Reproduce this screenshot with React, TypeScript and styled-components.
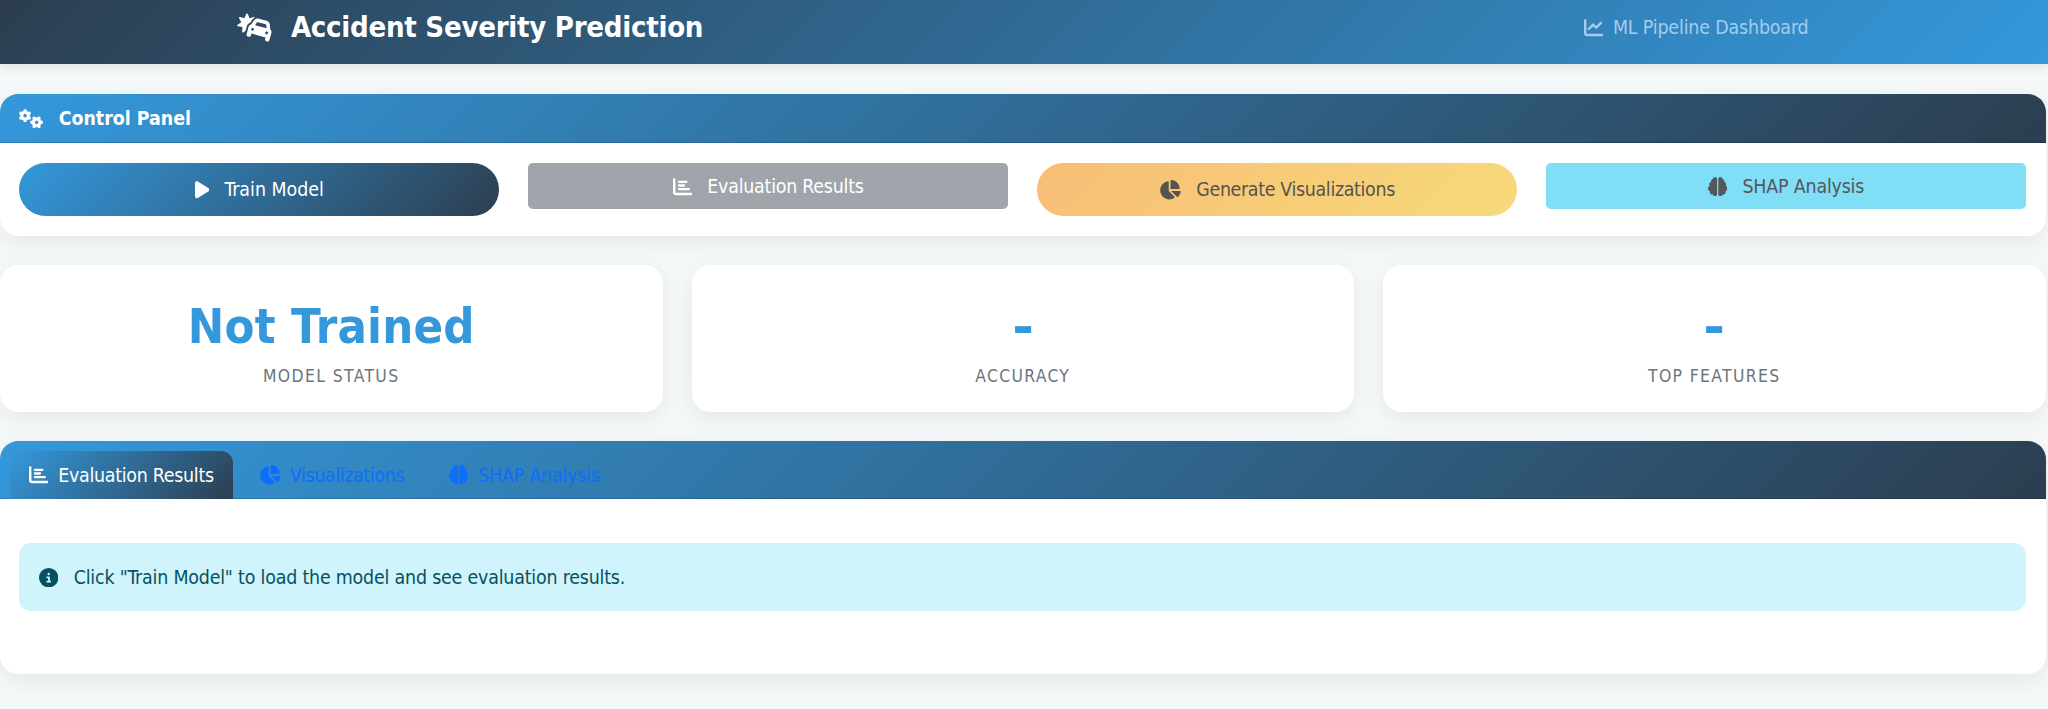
import React from 'react';
import styled, { createGlobalStyle, css } from 'styled-components';
import type { IconType } from 'react-icons';
import {
  FaBrain,
  FaCarBurst,
  FaChartBar,
  FaChartLine,
  FaChartPie,
  FaCircleInfo,
  FaGears,
  FaPlay,
} from 'react-icons/fa6';

const navy = '#2c3e50';
const blue = '#3498db';

const GlobalStyle = createGlobalStyle`
  *, *::before, *::after { box-sizing: border-box; }
  body {
    margin: 0;
    min-height: 100vh;
    background: #f5f9fa;
    color: #212529;
    font-family: "DejaVu Sans Condensed", "DejaVu Sans", sans-serif;
    font-size: 19.4px;
    line-height: 29px;
  }
`;

const IconBox = styled.span<{ $width: number }>`
  display: block;
  flex: none;
  width: ${(p) => p.$width}em;
  height: 1em;

  svg {
    display: block;
    width: 100%;
    height: 100%;
  }
`;

function Icon({ of: Glyph, width = 1 }: { of: IconType; width?: number }) {
  return (
    <IconBox $width={width}>
      <Glyph />
    </IconBox>
  );
}

const Text = styled.span<{ $tracking?: number }>`
  letter-spacing: ${(p) => p.$tracking ?? 0}px;
  white-space: nowrap;
`;

const Navbar = styled.header`
  height: 64.3px;
  background: linear-gradient(135deg, ${navy}, ${blue});
  box-shadow: 0 2px 12px rgba(0, 0, 0, 0.1);
`;

const NavInner = styled.div`
  display: flex;
  align-items: center;
  justify-content: space-between;
  width: 1571px;
  height: 55px;
  margin: 0 auto;
`;

const Brand = styled.div`
  display: flex;
  align-items: center;
  gap: 17.5px;
  margin-left: -1.5px;
  color: #fff;
  font-size: 29.1px;
  font-weight: 700;
`;

const NavNote = styled.div`
  display: flex;
  align-items: center;
  gap: 10px;
  margin-right: 1px;
  color: #a4cdee;
`;

const Page = styled.main`
  display: flex;
  flex-direction: column;
  gap: 29px;
  width: 2045.5px;
  padding: 29.3px 0 35px;
`;

const Card = styled.section`
  background: #fff;
  border-radius: 18.2px;
  box-shadow: 0 6px 24px rgba(0, 0, 0, 0.08);
`;

const headerSurface = css`
  display: flex;
  border-radius: 18.2px 18.2px 0 0;
  background: linear-gradient(135deg, ${blue}, ${navy});
  border-bottom: 1px solid rgba(0, 0, 0, 0.175);
`;

const CardHeader = styled.div`
  ${headerSurface}
  align-items: center;
  gap: 15px;
  height: 49.8px;
  padding: 1px 19.4px 0;
  color: #fff;
  font-weight: 700;
`;

const ButtonGrid = styled.div`
  display: grid;
  grid-template-columns: repeat(4, 1fr);
  align-items: start;
  gap: 29px;
  height: 92.3px;
  padding: 19.4px 19.4px 0;
`;

type Tone = 'primary' | 'secondary' | 'warning' | 'info';

const tones: Record<Tone, ReturnType<typeof css>> = {
  primary: css`
    color: #fff;
    background: linear-gradient(135deg, ${blue}, ${navy});
  `,
  secondary: css`
    color: #fff;
    background: #a0a4ab;
  `,
  warning: css`
    color: #56544f;
    background: linear-gradient(135deg, #f8bd76, #f6da79);
  `,
  info: css`
    color: #54585b;
    background: #81def7;
  `,
};

const ActionButton = styled.button<{ $tone: Tone; $pill?: boolean }>`
  display: flex;
  align-items: center;
  justify-content: center;
  gap: 15px;
  height: ${(p) => (p.$pill ? 53.4 : 46.2)}px;
  padding: 1px 0 0;
  border: 0;
  border-radius: ${(p) => (p.$pill ? 30 : 4.8)}px;
  font: inherit;
  ${(p) => tones[p.$tone]}
`;

const StatGrid = styled.div`
  display: grid;
  grid-template-columns: repeat(3, 1fr);
  gap: 29px;
`;

const StatCard = styled(Card)`
  display: flex;
  flex-direction: column;
  align-items: center;
  height: 147.4px;
  padding-top: 25px;
`;

const StatValue = styled.div<{ $empty?: boolean }>`
  color: ${blue};
  font-size: 48.5px;
  font-weight: 700;
  line-height: 73px;
  transform: ${(p) => (p.$empty ? 'scaleX(1.2)' : 'none')};
`;

const StatLabel = styled.div`
  color: #6c757d;
  font-size: 17.4px;
  line-height: 26px;
`;

const TabBar = styled.nav`
  ${headerSurface}
  align-items: flex-end;
  height: 58.2px;
  padding: 0 9.7px;
`;

const Tab = styled.button<{ $active?: boolean }>`
  display: flex;
  align-items: center;
  gap: 9.7px;
  height: 48.5px;
  margin: 0 6px -1px 0;
  padding: 0 19.4px;
  border: 0;
  border-radius: 12px 12px 0 0;
  color: ${(p) => (p.$active ? '#fff' : '#0d6efd')};
  background: ${(p) =>
    p.$active ? `linear-gradient(135deg, ${blue}, ${navy})` : 'transparent'};
  font: inherit;
`;

const TabPanel = styled.div`
  height: 174.7px;
  padding: 43.7px 19.4px 0;
`;

const Alert = styled.div`
  display: flex;
  align-items: center;
  gap: 15.5px;
  height: 67.8px;
  padding: 1px 19.4px 0;
  border-radius: 12px;
  color: #055160;
  background: #cff4fc;
`;

export default function App() {
  return (
    <>
      <GlobalStyle />
      <Navbar>
        <NavInner>
          <Brand>
            <Icon of={FaCarBurst} width={1.25} />
            <Text $tracking={-0.28}>Accident Severity Prediction</Text>
          </Brand>
          <NavNote>
            <Icon of={FaChartLine} />
            <Text $tracking={-0.15}>ML Pipeline Dashboard</Text>
          </NavNote>
        </NavInner>
      </Navbar>
      <Page>
        <Card>
          <CardHeader>
            <Icon of={FaGears} width={1.25} />
            <Text>Control Panel</Text>
          </CardHeader>
          <ButtonGrid>
            <ActionButton $tone="primary" $pill>
              <Icon of={FaPlay} width={0.75} />
              <Text>Train Model</Text>
            </ActionButton>
            <ActionButton $tone="secondary">
              <Icon of={FaChartBar} />
              <Text $tracking={-0.23}>Evaluation Results</Text>
            </ActionButton>
            <ActionButton $tone="warning" $pill>
              <Icon of={FaChartPie} width={1.125} />
              <Text $tracking={-0.33}>Generate Visualizations</Text>
            </ActionButton>
            <ActionButton $tone="info">
              <Icon of={FaBrain} />
              <Text $tracking={-0.18}>SHAP Analysis</Text>
            </ActionButton>
          </ButtonGrid>
        </Card>
        <StatGrid>
          <StatCard>
            <StatValue>
              <Text $tracking={0.2}>Not Trained</Text>
            </StatValue>
            <StatLabel>
              <Text $tracking={1.4}>MODEL STATUS</Text>
            </StatLabel>
          </StatCard>
          <StatCard>
            <StatValue $empty>-</StatValue>
            <StatLabel>
              <Text $tracking={1.3}>ACCURACY</Text>
            </StatLabel>
          </StatCard>
          <StatCard>
            <StatValue $empty>-</StatValue>
            <StatLabel>
              <Text $tracking={1.35}>TOP FEATURES</Text>
            </StatLabel>
          </StatCard>
        </StatGrid>
        <Card>
          <TabBar>
            <Tab $active>
              <Icon of={FaChartBar} />
              <Text $tracking={-0.27}>Evaluation Results</Text>
            </Tab>
            <Tab>
              <Icon of={FaChartPie} width={1.125} />
              <Text $tracking={-0.36}>Visualizations</Text>
            </Tab>
            <Tab>
              <Icon of={FaBrain} />
              <Text $tracking={-0.2}>SHAP Analysis</Text>
            </Tab>
          </TabBar>
          <TabPanel>
            <Alert>
              <Icon of={FaCircleInfo} />
              <Text $tracking={-0.19}>
                Click "Train Model" to load the model and see evaluation results.
              </Text>
            </Alert>
          </TabPanel>
        </Card>
      </Page>
    </>
  );
}
